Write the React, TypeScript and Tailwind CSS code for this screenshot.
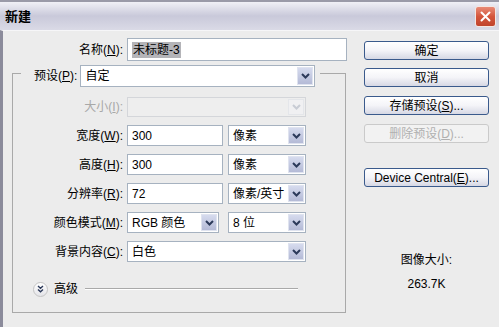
import React from 'react';

const FONT = "font-['Liberation_Sans','Noto_Sans_CJK_SC',sans-serif]";

const Chevron: React.FC<{ disabled?: boolean }> = ({ disabled }) => (
  <svg width="9" height="6" viewBox="0 0 9 6">
    <path
      d="M1 1 L4.5 4.5 L8 1"
      fill="none"
      stroke={disabled ? '#c8ccd4' : '#2c3a5a'}
      strokeWidth="2"
    />
  </svg>
);

const Label: React.FC<{ text: string; hotkey: string; disabled?: boolean }> = ({ text, hotkey, disabled }) => (
  <span className={`text-[12px] leading-none whitespace-nowrap ${disabled ? 'text-[#a8a8a8]' : 'text-black'}`}>
    {text}(<span className="underline">{hotkey}</span>):
  </span>
);

const Select: React.FC<{ value?: string; className: string; disabled?: boolean }> = ({ value, className, disabled }) => (
  <div
    className={`flex items-center justify-between border ${
      disabled ? 'border-[#d4d6da] bg-[#eeeeee]' : 'border-[#a6b2c0] bg-white'
    } ${className}`}
  >
    <span className="pl-[4px] text-[12px] leading-none text-black whitespace-nowrap">{value}</span>
    <div
      className={`m-[1px] flex h-[calc(100%-2px)] w-[16px] items-center justify-center border ${
        disabled
          ? 'border-[#e4e6ea] bg-[#f0f0f2]'
          : 'border-[#dfe3ef] bg-linear-to-b from-[#d6dbee] to-[#b4bad6]'
      }`}
    >
      <Chevron disabled={disabled} />
    </div>
  </div>
);

const TextInput: React.FC<{ className: string; children: React.ReactNode }> = ({ className, children }) => (
  <div className={`flex items-center border border-[#a6b2c0] bg-white pl-[4px] text-[12px] leading-none ${className}`}>
    {children}
  </div>
);

const XpButton: React.FC<{ children: React.ReactNode; disabled?: boolean; className?: string }> = ({
  children,
  disabled,
  className = '',
}) => (
  <div
    className={`flex h-[19px] w-[125px] items-center justify-center rounded-[3px] border text-[12px] leading-none ${
      disabled
        ? 'border-[#cacaca] bg-[#f2f2f2] text-[#b0b0b0]'
        : 'border-[#3a5a8c] bg-linear-to-b from-white via-[#f4f4f8] to-[#d6d8e4] text-black'
    } ${className}`}
  >
    {children}
  </div>
);

const Row: React.FC<{ label: React.ReactNode; children: React.ReactNode }> = ({ label, children }) => (
  <div className="flex h-[21px] items-center">
    <div className="flex w-[102px] justify-end">{label}</div>
    <div className="ml-[4px] flex gap-[5px]">{children}</div>
  </div>
);

const App: React.FC = () => {
  return (
    <div className={`flex h-[327px] w-[499px] flex-col overflow-hidden ${FONT}`}>
      {/* title bar */}
      <div className="flex h-[30px] shrink-0 items-center justify-between border-t-2 border-t-[#9a9aa8] bg-linear-to-b from-[#f0f0f6] via-[#c9c9da] to-[#dadae6] pl-[5px] pr-[3px]">
        <span className="text-[13px] font-bold leading-none text-black">新建</span>
        <div className="flex h-[21px] w-[21px] items-center justify-center rounded-[3px] border border-[#f4e6e2] bg-linear-to-b from-[#e88a76] via-[#d4553c] to-[#c0432c]">
          <svg width="11" height="11" viewBox="0 0 11 11">
            <path d="M1.5 1.5 L9.5 9.5 M9.5 1.5 L1.5 9.5" stroke="white" strokeWidth="2" strokeLinecap="round" />
          </svg>
        </div>
      </div>

      {/* body */}
      <div className="flex flex-1 border-l-[3px] border-t border-l-[#8b8b9b] border-t-[#f6f6f8] bg-[#ececec]">
        {/* left column */}
        <div className="w-[361px] shrink-0">
          <div className="mt-[7px] flex h-[23px] items-center">
            <div className="flex w-[120px] justify-end">
              <Label text="名称" hotkey="N" />
            </div>
            <TextInput className="ml-[4px] h-[23px] w-[220px]">
              <span className="bg-[#b4b4b8] px-[1px] py-[2px] text-black">未标题-3</span>
            </TextInput>
          </div>

          <fieldset className="mt-[4px] ml-[9px] w-[334px] border border-[#a9a9a9] px-[8px] pb-[16px] pt-[15px]">
            <legend className="h-[16px] pl-[13px] pr-[5px]">
              <div className="flex items-center gap-[3px]">
                <Label text="预设" hotkey="P" />
                <Select value="自定" className="h-[22px] w-[235px]" />
              </div>
            </legend>

            <div className="flex flex-col gap-[8px]">
              <Row label={<Label text="大小" hotkey="I" disabled />}>
                <Select className="h-[20px] w-[179px]" disabled />
              </Row>
              <Row label={<Label text="宽度" hotkey="W" />}>
                <TextInput className="h-[21px] w-[96px]">300</TextInput>
                <Select value="像素" className="h-[21px] w-[78px]" />
              </Row>
              <Row label={<Label text="高度" hotkey="H" />}>
                <TextInput className="h-[21px] w-[96px]">300</TextInput>
                <Select value="像素" className="h-[21px] w-[78px]" />
              </Row>
              <Row label={<Label text="分辨率" hotkey="R" />}>
                <TextInput className="h-[21px] w-[96px]">72</TextInput>
                <Select value="像素/英寸" className="h-[21px] w-[78px]" />
              </Row>
              <Row label={<Label text="颜色模式" hotkey="M" />}>
                <Select value="RGB 颜色" className="h-[21px] w-[92px]" />
                <Select value="8 位" className="ml-[4px] h-[21px] w-[78px]" />
              </Row>
              <Row label={<Label text="背景内容" hotkey="C" />}>
                <Select value="白色" className="h-[21px] w-[179px]" />
              </Row>
            </div>

            <div className="mt-[20px] ml-[12px] flex h-[14px] items-center">
              <div className="flex h-[15px] w-[15px] items-center justify-center rounded-full border border-[#c4c4c4] bg-linear-to-b from-white to-[#e4e4e8]">
                <svg width="7" height="8" viewBox="0 0 7 8">
                  <path d="M1 1 L3.5 3.2 L6 1 M1 4.5 L3.5 6.7 L6 4.5" fill="none" stroke="#2c3a5a" strokeWidth="1.4" />
                </svg>
              </div>
              <span className="ml-[6px] text-[12px] leading-none text-black">高级</span>
              <div className="ml-[7px] h-[2px] w-[213px] border-t border-b border-t-[#a9a9a9] border-b-white" />
            </div>
          </fieldset>
        </div>

        {/* right column */}
        <div className="flex w-[125px] flex-col pt-[10px]">
          <XpButton>确定</XpButton>
          <XpButton className="mt-[8px]">取消</XpButton>
          <XpButton className="mt-[9px]">
            存储预设(<span className="underline">S</span>)...
          </XpButton>
          <XpButton className="mt-[9px]" disabled>
            删除预设(<span className="underline">D</span>)...
          </XpButton>
          <XpButton className="mt-[25px]">
            Device Central(<span className="underline">E</span>)...
          </XpButton>
          <div className="mt-[65px] text-center text-[12px] leading-[16px] text-black">图像大小:</div>
          <div className="mt-[8px] text-center text-[12px] leading-[16px] text-black">263.7K</div>
        </div>
      </div>
    </div>
  );
};

export default App;
